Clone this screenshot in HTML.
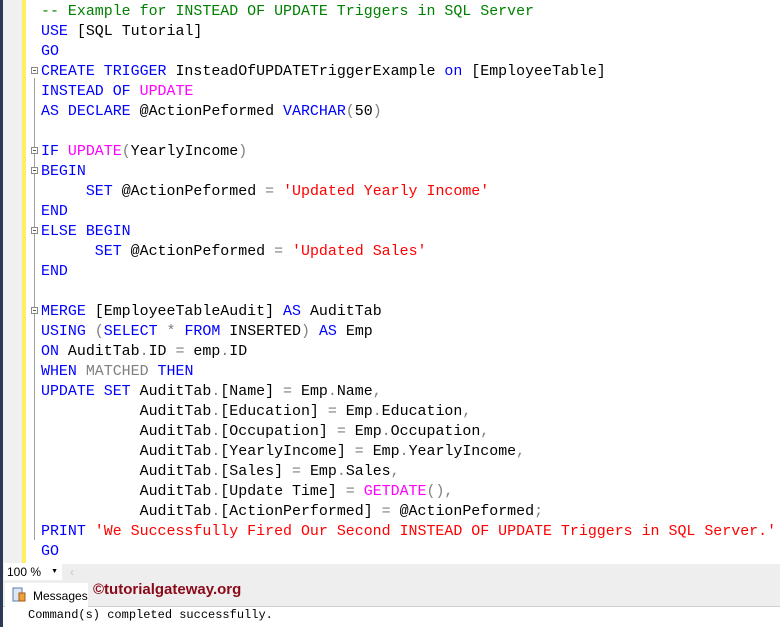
<!DOCTYPE html>
<html><head><style>
body{margin:0;width:780px;height:627px;overflow:hidden;background:#fff;position:relative;font-family:"Liberation Mono",monospace}
.a{position:absolute}
#code{position:absolute;left:41px;top:2px;font-size:14.95px;line-height:20px;white-space:pre;color:#000}
.k{color:#0000ff}.f{color:#ff00ff}.s{color:#ff0000}.g{color:#808080}.c{color:#008000}
.fb{position:absolute;left:31px;width:7px;height:7px;border:1px solid #8a8a8a;background:#fff;box-sizing:border-box}
.fb:after{content:"";position:absolute;left:1px;top:2px;width:3px;height:1px;background:#555}
</style></head><body>
<div class="a" style="left:0;top:0;width:3px;height:627px;background:#2b3a55"></div>
<div class="a" style="left:3px;top:0;width:19px;height:563px;background:#f0f0f0"></div>
<div class="a" style="left:22px;top:0;width:4px;height:563px;background:#ffee62"></div>
<div class="a" style="left:34px;top:78px;width:1px;height:462px;background:#a0a0a0"></div>
<div class="fb" style="top:67px"></div>
<div class="fb" style="top:147px"></div>
<div class="fb" style="top:167px"></div>
<div class="fb" style="top:227px"></div>
<div class="fb" style="top:307px"></div>
<div id="code"><span class="c">-- Example for INSTEAD OF UPDATE Triggers in SQL Server</span>
<span class="k">USE</span> [SQL Tutorial]
<span class="k">GO</span>
<span class="k">CREATE TRIGGER</span> InsteadOfUPDATETriggerExample <span class="k">on</span> [EmployeeTable]
<span class="k">INSTEAD OF</span> <span class="f">UPDATE</span>
<span class="k">AS DECLARE</span> @ActionPeformed <span class="k">VARCHAR</span><span class="g">(</span>50<span class="g">)</span>

<span class="k">IF</span> <span class="f">UPDATE</span><span class="g">(</span>YearlyIncome<span class="g">)</span>
<span class="k">BEGIN</span>
     <span class="k">SET</span> @ActionPeformed <span class="g">=</span> <span class="s">'Updated Yearly Income'</span>
<span class="k">END</span>
<span class="k">ELSE BEGIN</span>
      <span class="k">SET</span> @ActionPeformed <span class="g">=</span> <span class="s">'Updated Sales'</span>
<span class="k">END</span>

<span class="k">MERGE</span> [EmployeeTableAudit] <span class="k">AS</span> AuditTab
<span class="k">USING</span> <span class="g">(</span><span class="k">SELECT</span> <span class="g">*</span> <span class="k">FROM</span> INSERTED<span class="g">)</span> <span class="k">AS</span> Emp
<span class="k">ON</span> AuditTab<span class="g">.</span>ID <span class="g">=</span> emp<span class="g">.</span>ID
<span class="k">WHEN</span> <span class="g">MATCHED</span> <span class="k">THEN</span>
<span class="k">UPDATE SET</span> AuditTab<span class="g">.</span>[Name] <span class="g">=</span> Emp<span class="g">.</span>Name<span class="g">,</span>
           AuditTab<span class="g">.</span>[Education] <span class="g">=</span> Emp<span class="g">.</span>Education<span class="g">,</span>
           AuditTab<span class="g">.</span>[Occupation] <span class="g">=</span> Emp<span class="g">.</span>Occupation<span class="g">,</span>
           AuditTab<span class="g">.</span>[YearlyIncome] <span class="g">=</span> Emp<span class="g">.</span>YearlyIncome<span class="g">,</span>
           AuditTab<span class="g">.</span>[Sales] <span class="g">=</span> Emp<span class="g">.</span>Sales<span class="g">,</span>
           AuditTab<span class="g">.</span>[Update Time] <span class="g">=</span> <span class="f">GETDATE</span><span class="g">(),</span>
           AuditTab<span class="g">.</span>[ActionPerformed] <span class="g">=</span> @ActionPeformed<span class="g">;</span>
<span class="k">PRINT</span> <span class="s">'We Successfully Fired Our Second INSTEAD OF UPDATE Triggers in SQL Server.'</span>
<span class="k">GO</span></div>
<div class="a" style="left:3px;top:564px;width:777px;height:42px;background:#eeeeee;border-bottom:1px solid #d0d0d0"></div>
<div class="a" style="left:4px;top:564px;width:58px;height:16px;background:#fff;font:12px 'Liberation Sans',sans-serif;line-height:16px;padding-left:3px;box-sizing:border-box">100 %<span style="position:absolute;right:4px;top:0;font-size:7px">▼</span></div>
<div class="a" style="left:70px;top:564px;color:#c8c8c8;font:12px 'Liberation Sans',sans-serif;line-height:16px">‹</div>
<div class="a" style="left:5px;top:583px;width:83px;height:24px;background:#fff;font:12px 'Liberation Sans',sans-serif;line-height:26px">
<svg class="a" style="left:7px;top:4px" width="14" height="16"><rect x="1" y="1" width="9" height="13" fill="#dde6f3" stroke="#5b7bb0"/><rect x="7" y="6" width="6" height="8" fill="#f0a040" stroke="#a05a10"/></svg>
<span style="position:absolute;left:28px">Messages</span></div>
<div class="a" style="left:93px;top:581px;color:#8b0a1a;font:bold 15px 'Liberation Sans',sans-serif">©tutorialgateway.org</div>
<div class="a" style="left:28px;top:607px;font-size:12px;line-height:16px">Command(s) completed successfully.</div>
</body></html>
